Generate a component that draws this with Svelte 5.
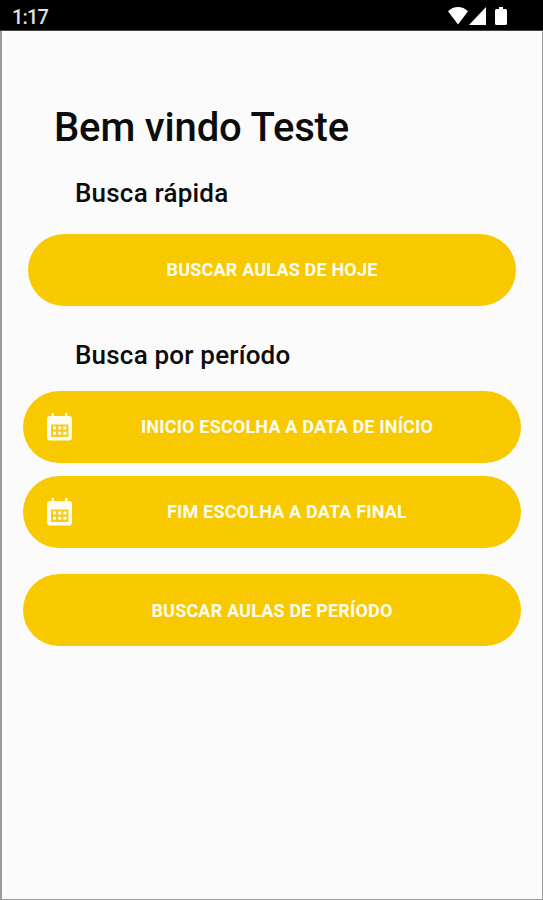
<script>
  let userName = 'Teste'
  let time = '1:17'

  const dates = [
    { id: 'start', label: 'Inicio Escolha a data de início' },
    { id: 'end', label: 'Fim Escolha a data final' }
  ]
</script>

<div class="screen">
  <header class="status-bar">
    <span class="time">{time}</span>
    <div class="status-icons">
      <svg width="20" height="18" viewBox="0 0 20 18">
        <path d="M0 4.2C2.8 1.5 6.2 0 10 0s7.200 1.500 10 4.200L10 17.500z" />
      </svg>
      <svg width="17" height="18" viewBox="0 0 17 18">
        <path d="M17 0v18H0z" />
      </svg>
      <svg class="battery" width="12" height="18" viewBox="0 0 12 18">
        <path d="M4 0h4v2h2.500q1.500 0 1.500 1.500v13q0 1.500-1.500 1.500h-9Q0 18 0 16.500v-13Q0 2 1.500 2H4z" />
      </svg>
    </div>
  </header>

  <main>
    <h1>Bem vindo {userName}</h1>

    <section class="quick">
      <h2>Busca rápida</h2>
      <button type="button" class="pill">
        <span class="label">Buscar aulas de hoje</span>
      </button>
    </section>

    <section class="period">
      <h2>Busca por período</h2>
      {#each dates as date (date.id)}
        <button type="button" class="pill date">
          <svg class="calendar" width="25" height="28" viewBox="0 0 25 28">
            <path
              d="M4.500 0H7v3h11V0h2.500v3H22q3 0 3 3v18.500q0 3-3 3H3q-3 0-3-3V6q0-3 3-3h1.500z"
            />
            <path class="sheet" d="M4 11.500h17.500v12.500H4z" />
            <path
              d="M6 13.500h3v3H6zM11.200 13.500h3v3h-3zM16.400 13.500h3v3h-3zM6 18.800h3v3H6zM11.200 18.800h3v3h-3zM16.400 18.800h3v3h-3z"
            />
          </svg>
          <span class="label">{date.label}</span>
        </button>
      {/each}
      <button type="button" class="pill submit">
        <span class="label">Buscar aulas de período</span>
      </button>
    </section>
  </main>
</div>

<style>
  :global(body) {
    margin: 0;
  }

  .screen {
    display: flex;
    flex-direction: column;
    box-sizing: border-box;
    width: 543px;
    height: 900px;
    overflow: hidden;
    background: #fbfbfb;
    color: #0c0c0c;
    font-family: Roboto, 'Liberation Sans', sans-serif;
  }

  .status-bar {
    display: flex;
    flex: none;
    align-items: center;
    justify-content: space-between;
    box-sizing: border-box;
    height: 31px;
    padding: 2px 36px 0 12px;
    border-bottom: 1px solid #444;
    background: #000;
    color: #e0e0e0;
  }

  .time {
    padding-top: 2px;
    font-size: 20px;
    font-weight: 500;
    line-height: 26px;
    letter-spacing: -0.8px;
  }

  .status-icons {
    display: flex;
    align-items: center;
    gap: 1px;
    fill: #fff;
  }

  .battery {
    margin-left: 8px;
  }

  main {
    flex: 1;
    padding: 73px 21px 0 20px;
    border: solid #9b9b9b;
    border-width: 0 1px 1px 2px;
  }

  h1 {
    margin: 0 0 0 32px;
    font-size: 40px;
    font-weight: 500;
    line-height: 48px;
    letter-spacing: -0.15px;
  }

  h2 {
    margin: 0;
    font-size: 26px;
    font-weight: 500;
    line-height: 32px;
    letter-spacing: 0.2px;
  }

  .pill {
    display: flex;
    align-items: center;
    width: 100%;
    height: 72px;
    padding: 0 24px 2px;
    border: none;
    border-radius: 36px;
    background: #f9c900;
    color: #fffdf0;
    font-family: inherit;
    font-size: 18px;
    font-weight: 700;
    letter-spacing: 0.18px;
    text-transform: uppercase;
    cursor: pointer;
  }

  .label {
    flex: 1;
    text-align: center;
  }

  .quick {
    padding: 25px 5px 0 6px;
  }

  .quick h2 {
    margin-left: 47px;
  }

  .quick .pill {
    margin-top: 25px;
  }

  .period {
    padding: 33px 0 0 1px;
  }

  .period h2 {
    margin: 0 0 20px 52px;
  }

  .date {
    margin-bottom: 13px;
  }

  .date .label {
    margin-left: 5px;
  }

  .calendar {
    flex: none;
    margin-top: 2px;
    fill: #fffdf0;
  }

  .sheet {
    fill: #f5cb20;
  }

  .submit {
    margin-top: 26px;
    padding-bottom: 0;
  }
</style>
